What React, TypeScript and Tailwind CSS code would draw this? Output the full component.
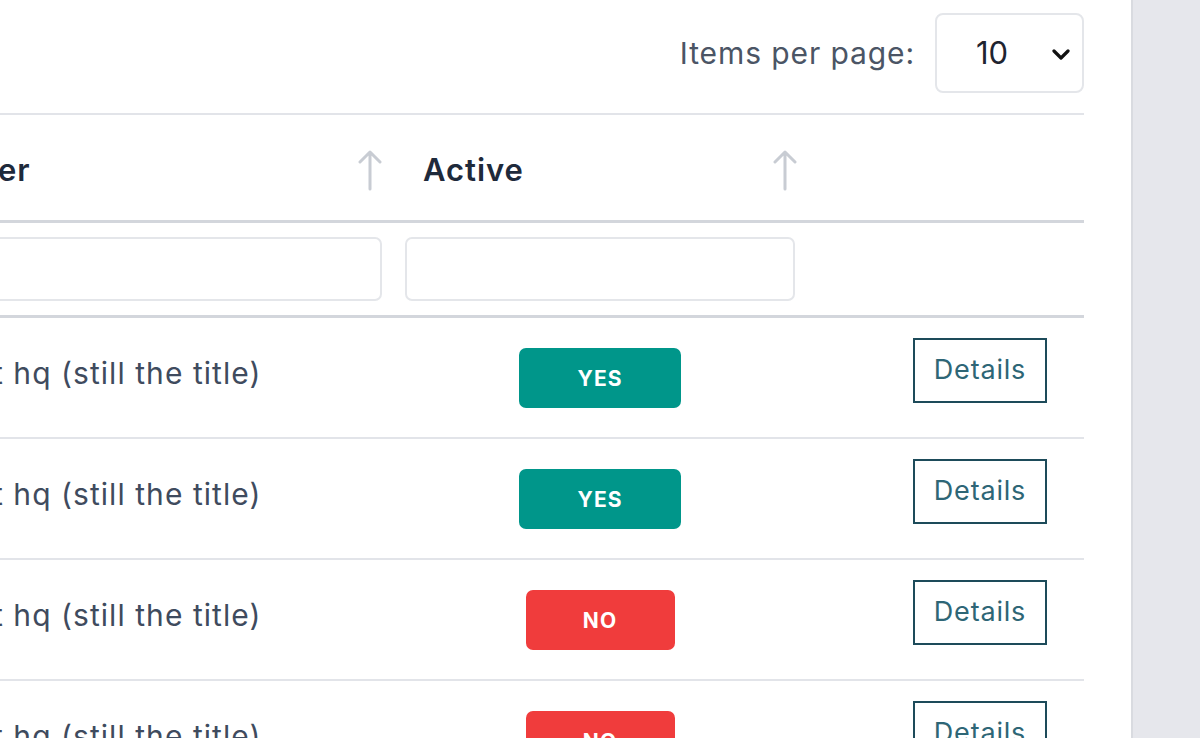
import { useState } from 'react';

type Row = { title: string; active: boolean };

const ROWS: Row[] = [
  { title: 't hq (still the title)', active: true },
  { title: 't hq (still the title)', active: true },
  { title: 't hq (still the title)', active: false },
  { title: 't hq (still the title)', active: false },
];

function SortArrow() {
  return (
    <svg width="24" height="42" viewBox="0 0 24 42" fill="none" className="shrink-0">
      <path d="M12 3 V40 M2 13 L12 3 L22 13" stroke="#c8ccd3" strokeWidth="3" strokeLinecap="round" strokeLinejoin="round" />
    </svg>
  );
}

function StatusBadge({ active }: { active: boolean }) {
  return active ? (
    <span className="flex h-[60px] w-[162px] items-center justify-center rounded-[7px] bg-[#00968a] pt-[2px] text-[21px] font-bold tracking-wider text-white">
      YES
    </span>
  ) : (
    <span className="flex h-[60px] w-[149px] items-center justify-center rounded-[7px] bg-[#f03c3c] pt-[2px] text-[21px] font-bold tracking-wider text-white">
      NO
    </span>
  );
}

export default function App() {
  const [perPage, setPerPage] = useState('10');

  return (
    <div className="flex h-[738px] w-[1200px] overflow-hidden bg-[#e6e7ec] font-['Inter',sans-serif]">
      <div className="w-[1133px] shrink-0 border-r-2 border-[#d9dbe0] bg-white pr-[47px]">
        {/* toolbar */}
        <div className="flex h-[113px] items-start justify-end pt-[13px]">
          <div className="flex h-[80px] items-center gap-[20px]">
            <span className="text-[30px] tracking-[0.03em] text-[#4b5565]">Items per page:</span>
            <div className="relative h-[80px] w-[149px] rounded-[8px] border-2 border-[#e4e6ea]">
              <select
                value={perPage}
                onChange={(e) => setPerPage(e.target.value)}
                className="h-full w-full appearance-none bg-transparent pl-[39px] text-[31px] text-[#1f2430] outline-none"
              >
                <option>10</option>
                <option>25</option>
                <option>50</option>
              </select>
              <svg width="18" height="12" viewBox="0 0 18 12" className="pointer-events-none absolute right-[12px] top-[34px]">
                <path d="M2 2 L9 9 L16 2" stroke="#111" strokeWidth="3.2" fill="none" strokeLinecap="round" strokeLinejoin="round" />
              </svg>
            </div>
          </div>
        </div>

        <div className="border-t-2 border-[#e2e4e9]">
          {/* header */}
          <div className="flex h-[108px] items-center border-b-[3px] border-[#d3d6dc] pt-[5px]">
            <div className="flex w-[394px] items-center justify-between pr-[12px]">
              <span className="-ml-[2px] text-[31px] font-semibold tracking-[0.03em] text-[#1e2a3b]">er</span>
              <SortArrow />
            </div>
            <div className="flex w-[412px] items-center justify-between pl-[29px] pr-[9px]">
              <span className="text-[31px] font-semibold tracking-[0.03em] text-[#1e2a3b]">Active</span>
              <SortArrow />
            </div>
            <div className="flex-1" />
          </div>

          {/* filters */}
          <div className="flex h-[95px] items-center border-b-[3px] border-[#d3d6dc]">
            <div className="w-[394px] pr-[12px]">
              <input className="-ml-[10px] h-[64px] w-[calc(100%+10px)] rounded-[7px] border-2 border-[#e4e6ea] outline-none" />
            </div>
            <div className="w-[412px] px-[11px]">
              <input className="h-[64px] w-full rounded-[7px] border-2 border-[#e4e6ea] outline-none" />
            </div>
            <div className="flex-1" />
          </div>

          {/* rows */}
          {ROWS.map((row, i) => (
            <div key={i} className="flex h-[121px] items-center border-b-2 border-[#e2e4e9]">
              <div className="w-[394px] overflow-hidden">
                <span className="-ml-[7px] block whitespace-nowrap pb-[8px] text-[30px] tracking-[0.035em] text-[#3f4b5e]">{row.title}</span>
              </div>
              <div className="flex w-[412px] justify-center">
                <StatusBadge active={row.active} />
              </div>
              <div className="flex flex-1 justify-end pb-[14px] pr-[37px]">
                <button className="flex h-[65px] w-[134px] items-center justify-center border-2 border-[#1d4b5a] text-[27px] tracking-[0.03em] text-[#2e6676]">
                  Details
                </button>
              </div>
            </div>
          ))}
        </div>
      </div>
      <div className="flex-1" />
    </div>
  );
}
